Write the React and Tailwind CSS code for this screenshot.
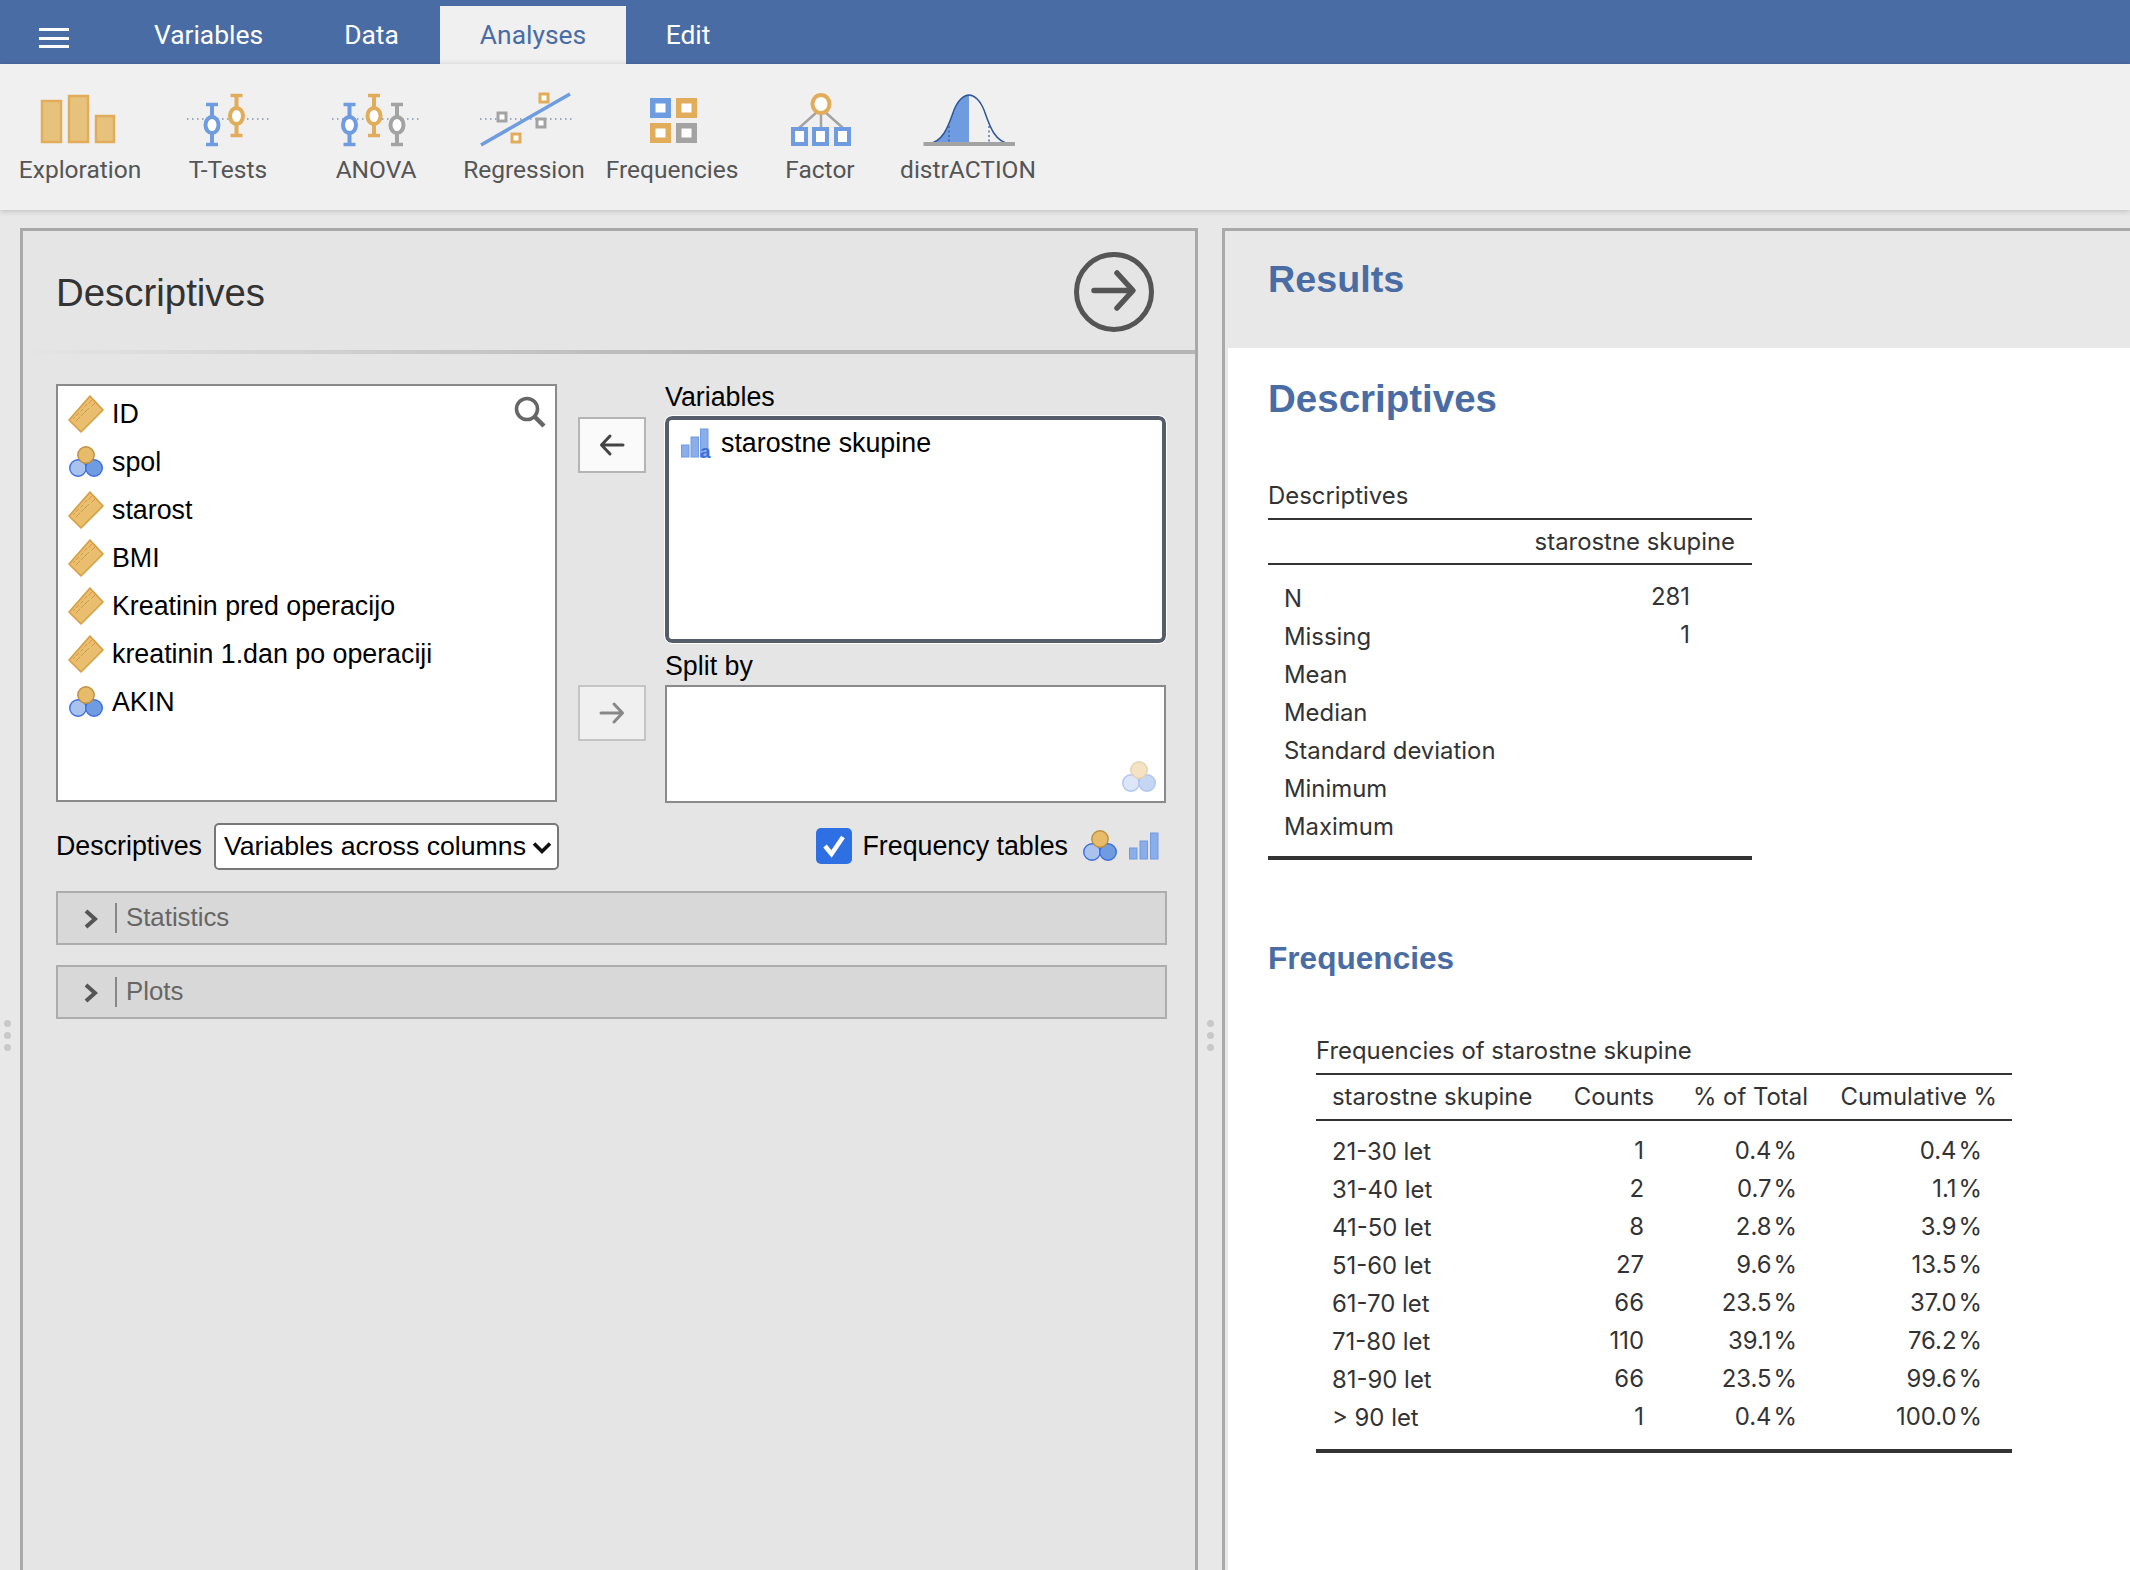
import React from "react";

const BLUE = "#6f9be0";
const ORANGE = "#e2ad5b";
const GREY = "#a3a3a3";

function Whisker({ x, top, bottom, cy, color }) {
  return (
    <g stroke={color} fill="none">
      <path d={`M${x} ${top}V${bottom}`} strokeWidth="4" />
      <path d={`M${x - 6} ${top + 1.5}H${x + 6}M${x - 6} ${bottom - 1.5}H${x + 6}`} strokeWidth="3.5" />
      <ellipse cx={x} cy={cy} rx="6.5" ry="8" fill="#fff" strokeWidth="4" />
    </g>
  );
}

function Dotted({ x1, x2 }) {
  return <path d={`M${x1} 29H${x2}`} stroke="#7f93ad" strokeWidth="1.5" strokeDasharray="1.5 3.5" fill="none" />;
}

function Sq({ x, y, w = 10, h = 10, color }) {
  return <rect x={x} y={y} width={w} height={h} fill="#fff" stroke={color} strokeWidth="3" />;
}

const ToolIcons = {
  Exploration: (
    <g fill="#e6c27c" stroke={ORANGE} strokeWidth="2.5">
      <rect x="36" y="11" width="19" height="41" />
      <rect x="63" y="6" width="19" height="46" />
      <rect x="90" y="26" width="18" height="26" />
    </g>
  ),
  "T-Tests": (
    <g>
      <Dotted x1="33" x2="118" />
      <Whisker x={58} top={13} bottom={56} cy={35} color={BLUE} />
      <Whisker x={82.5} top={4} bottom={47} cy={26} color={ORANGE} />
    </g>
  ),
  ANOVA: (
    <g>
      <Dotted x1="30" x2="119" />
      <Whisker x={47.5} top={13} bottom={56} cy={35} color={BLUE} />
      <Whisker x={72} top={4} bottom={47} cy={26} color={ORANGE} />
      <Whisker x={95} top={13} bottom={56} cy={35} color={GREY} />
    </g>
  ),
  Regression: (
    <g>
      <Dotted x1="30" x2="122" />
      <path d="M31 55L120 4" stroke={BLUE} strokeWidth="3.5" fill="none" />
      <Sq x={90} y={4} w={8} h={8} color={ORANGE} />
      <Sq x={48} y={23} w={8} h={8} color={GREY} />
      <Sq x={87} y={29} w={8} h={8} color={GREY} />
      <Sq x={62} y={44} w={8} h={8} color={ORANGE} />
    </g>
  ),
  Frequencies: (
    <g>
      <rect x="52" y="8" width="21" height="20" fill={BLUE} />
      <rect x="78" y="8" width="21" height="20" fill={ORANGE} />
      <rect x="52" y="33" width="21" height="20" fill={ORANGE} />
      <rect x="78" y="33" width="21" height="20" fill={GREY} />
      <g fill="#fff">
        <rect x="57.5" y="13.5" width="10" height="9" />
        <rect x="83.5" y="13.5" width="10" height="9" />
        <rect x="57.5" y="38.5" width="10" height="9" />
        <rect x="83.5" y="38.5" width="10" height="9" />
      </g>
    </g>
  ),
  Factor: (
    <g>
      <path d="M71 22L53 38M75 22V38M79 22L97 38" stroke={GREY} strokeWidth="2.5" fill="none" />
      <ellipse cx="75" cy="14" rx="8.5" ry="9" fill="#fff" stroke={ORANGE} strokeWidth="4" />
      <g fill="#fff" stroke={BLUE} strokeWidth="4">
        <rect x="47" y="39" width="13" height="15" />
        <rect x="68" y="39" width="13" height="15" />
        <rect x="90" y="39" width="13" height="15" />
      </g>
    </g>
  ),
  distrACTION: (
    <g>
      <path d="M34 54C50 52 55 34 60 20C64 10 70 5 75 5V54Z" fill={BLUE} />
      <path d="M34 54C50 52 55 34 60 20C64 10 70 5 75 5C80 5 86 10 90 20C95 34 100 52 116 54" stroke="#2f5597" strokeWidth="1.5" fill="none" />
      <path d="M55 36V54M95 36V54" stroke="#2f5597" strokeWidth="1.2" strokeDasharray="2 2.5" fill="none" />
      <path d="M29.5 54H121" stroke="#a3a3a3" strokeWidth="4" fill="none" />
    </g>
  ),
};

function ToolButton({ label }) {
  return (
    <div className="w-[148px] flex flex-col items-center">
      <svg width="148" height="64" viewBox="0 0 148 64" className="mt-[26px]">
        {ToolIcons[label]}
      </svg>
      <div className="h-[32px] leading-[32px] text-[24.5px] text-[#555] whitespace-nowrap font-['Roboto',sans-serif]">{label}</div>
    </div>
  );
}

function Ruler({ className = "" }) {
  return (
    <svg width="36" height="38" viewBox="0 0 36 38" className={className}>
      <path d="M22 1L35 15L13 37L1 25Z" fill="#e9be6e" stroke="#d89e42" strokeWidth="1.6" strokeLinejoin="round" />
      <path d="M24 5L20.5 8.5M27 8L23.5 11.5M19 9L16.5 11.5M21 13L16.5 17.5M15 14L12.5 16.5M16 18L13 21M11 18L8 21M12 22L7.5 26.5M7 22L5 24" stroke="#cf9a48" strokeWidth="1" fill="none" />
    </svg>
  );
}

function Nominal({ className = "" }) {
  return (
    <svg width="34" height="32" viewBox="0 0 34 32" className={className}>
      <circle cx="9" cy="22" r="8.3" fill="#a9c3ee" stroke="#3f6fdc" strokeWidth="1.4" />
      <circle cx="25" cy="22" r="8.3" fill="#6f9be0" stroke="#3f6fdc" strokeWidth="1.4" />
      <ellipse cx="17" cy="9" rx="8.2" ry="8.2" fill="#e6bb6a" stroke="#c28f3f" strokeWidth="1.4" />
    </svg>
  );
}

function BarsA({ className = "" }) {
  return (
    <svg width="32" height="30" viewBox="0 0 32 30" className={className}>
      <g fill="#8badea" stroke="#6f9be0" strokeWidth="1">
        <rect x="0.5" y="17" width="7.5" height="12" />
        <rect x="10" y="9" width="7.5" height="20" />
        <rect x="19.5" y="1" width="7.5" height="28" />
      </g>
      <text x="19" y="29.5" fontSize="19" fontWeight="700" fill="#3f6fdc" fontFamily="'Liberation Sans',sans-serif">a</text>
    </svg>
  );
}

function Bars({ className = "" }) {
  return (
    <svg width="30" height="28" viewBox="0 0 30 28" className={className}>
      <g fill="#8badea" stroke="#6f9be0" strokeWidth="1">
        <rect x="0.5" y="16" width="7.5" height="11" />
        <rect x="11" y="9" width="7.5" height="18" />
        <rect x="21.5" y="1" width="7.5" height="26" />
      </g>
    </svg>
  );
}

function ArrowLeft({ color }) {
  return (
    <svg width="26" height="24" viewBox="0 0 26 24">
      <path d="M24 12H3M11 3L2.5 12L11 21" stroke={color} strokeWidth="3" fill="none" strokeLinecap="round" strokeLinejoin="round" />
    </svg>
  );
}

function ArrowRight({ color }) {
  return (
    <svg width="26" height="24" viewBox="0 0 26 24">
      <path d="M2 12H23M15 3L23.5 12L15 21" stroke={color} strokeWidth="3" fill="none" strokeLinecap="round" strokeLinejoin="round" />
    </svg>
  );
}

function VarRow({ name, kind }) {
  return (
    <div className="h-[48px] flex items-center">
      <div className="w-[43px] shrink-0 flex justify-start">
        {kind === "r" ? <Ruler className="-ml-[1px]" /> : <Nominal />}
      </div>
      <span className="text-[26.8px] text-black leading-none">{name}</span>
    </div>
  );
}

function Collapse({ label }) {
  return (
    <div className="h-[54px] flex items-center bg-[#d8d8d8] border-2 border-[#adadad]">
      <svg width="16" height="22" viewBox="0 0 16 22" className="ml-[25px] mt-[2px]">
        <path d="M3 3L12 11L3 19" stroke="#555" strokeWidth="4" fill="none" />
      </svg>
      <div className="ml-[16px] w-[2px] h-[30px] bg-[#888]" />
      <span className="ml-[9px] text-[25.8px] text-[#666] leading-none">{label}</span>
    </div>
  );
}

function Dots() {
  return (
    <div className="flex flex-col gap-[5px] items-center">
      <div className="w-[7px] h-[7px] rounded-full bg-[#c8c8c8]" />
      <div className="w-[7px] h-[7px] rounded-full bg-[#c8c8c8]" />
      <div className="w-[7px] h-[7px] rounded-full bg-[#c8c8c8]" />
    </div>
  );
}

const descRows = [
  ["N", "281"],
  ["Missing", "1"],
  ["Mean", ""],
  ["Median", ""],
  ["Standard deviation", ""],
  ["Minimum", ""],
  ["Maximum", ""],
];

const freqRows = [
  ["21-30 let", "1", "0.4", "0.4"],
  ["31-40 let", "2", "0.7", "1.1"],
  ["41-50 let", "8", "2.8", "3.9"],
  ["51-60 let", "27", "9.6", "13.5"],
  ["61-70 let", "66", "23.5", "37.0"],
  ["71-80 let", "110", "39.1", "76.2"],
  ["81-90 let", "66", "23.5", "99.6"],
  ["> 90 let", "1", "0.4", "100.0"],
];

function Pct({ v }) {
  return (
    <span>
      {v}
      <span className="ml-[2px]">%</span>
    </span>
  );
}

function Tab({ w, active, children }) {
  return (
    <div className={`${w} h-[58px] flex items-center justify-center text-[26.4px] pt-[2px] ${active ? "text-[#4a6ca5] bg-[#f0f0f0]" : "text-white"}`}>
      {children}
    </div>
  );
}

export default function App() {
  return (
    <div className="w-[2130px] h-[1570px] overflow-hidden flex flex-col bg-[#e8e8e8] font-['Liberation_Sans',Arial,sans-serif]">
      {/* Tab bar */}
      <div className="h-[64px] shrink-0 bg-[#4a6ca5] flex items-end font-['Roboto',sans-serif]">
        <div className="w-[114px] h-full flex items-start pt-[28px] pl-[39px]">
          <div className="w-[30px] flex flex-col gap-[5.5px]">
            <div className="h-[3px] bg-white" />
            <div className="h-[3px] bg-white" />
            <div className="h-[3px] bg-white" />
          </div>
        </div>
        <Tab w="w-[189px]">Variables</Tab>
        <Tab w="w-[137px]">Data</Tab>
        <Tab w="w-[186px]" active>Analyses</Tab>
        <Tab w="w-[124px]">Edit</Tab>
      </div>

      {/* Toolbar */}
      <div className="h-[146px] shrink-0 bg-[#f0f0f0] flex pl-[6px] shadow-[0_1px_6px_rgba(0,0,0,0.2)] relative">
        {Object.keys(ToolIcons).map((k) => (
          <ToolButton key={k} label={k} />
        ))}
      </div>

      {/* Main */}
      <div className="flex-1 flex min-h-0 pt-[18px]">
        <div className="w-[20px] shrink-0 flex justify-center pt-[792px] pr-[6px]">
          <Dots />
        </div>

        {/* Options panel */}
        <div className="w-[1178px] shrink-0 bg-[#e5e5e5] border-[3px] border-b-0 border-[#a9a9a9]">
          <div className="h-[119px] flex items-center justify-between pl-[33px] pr-[41px] pt-[3px]">
            <span className="text-[38.4px] text-[#333] leading-none mt-[3px]">Descriptives</span>
            <svg width="80" height="80" viewBox="0 0 80 80">
              <circle cx="40" cy="40" r="37.5" stroke="#555" strokeWidth="5" fill="none" />
              <path d="M20 38.5H57M43 21L59 38.5L43 56" stroke="#555" strokeWidth="5.5" fill="none" strokeLinecap="round" strokeLinejoin="round" />
            </svg>
          </div>
          <div className="h-[4px] bg-gradient-to-r from-[#e5e5e5] to-[#b5b5b5] to-60%" />

          <div className="pl-[33px] pr-[28px] pt-[30px]">
            <div className="flex">
              <div className="relative w-[501px] h-[418px] shrink-0 bg-white border-2 border-[#8a8a8a] pl-[11px] pt-[4px]">
                <VarRow name="ID" kind="r" />
                <VarRow name="spol" kind="n" />
                <VarRow name="starost" kind="r" />
                <VarRow name="BMI" kind="r" />
                <VarRow name="Kreatinin pred operacijo" kind="r" />
                <VarRow name="kreatinin 1.dan po operaciji" kind="r" />
                <VarRow name="AKIN" kind="n" />
                <svg width="32" height="32" viewBox="0 0 32 32" className="absolute right-[9px] top-[10px]">
                  <circle cx="13" cy="13" r="10.5" stroke="#666" strokeWidth="3.6" fill="none" />
                  <path d="M21 21L30 30" stroke="#666" strokeWidth="4.5" fill="none" />
                </svg>
              </div>

              <div className="w-[68px] shrink-0 ml-[21px] pt-[33px] flex flex-col gap-[212px]">
                <div className="h-[56px] flex items-center justify-center bg-[#fafafa] border-2 border-[#b5b5b5]">
                  <ArrowLeft color="#444" />
                </div>
                <div className="h-[56px] flex items-center justify-center bg-[#f0f0f0] border-2 border-[#c4c4c4]">
                  <ArrowRight color="#888" />
                </div>
              </div>

              <div className="w-[501px] shrink-0 ml-[19px]">
                <div className="h-[32px] text-[26.8px] leading-[26px] text-black">Variables</div>
                <div className="h-[227px] bg-white rounded-[7px] border-[4px] border-[#555d69] outline-1 outline-white flex items-start pl-[12px] pt-[8px]">
                  <BarsA />
                  <span className="ml-[8px] text-[26.8px] leading-[30px] text-black">starostne skupine</span>
                </div>
                <div className="h-[42px] pt-[9px] text-[26.8px] leading-[28px] text-black">Split by</div>
                <div className="relative h-[118px] bg-white border-2 border-[#8a8a8a]">
                  <Nominal className="absolute right-[8px] bottom-[8px] opacity-40" />
                </div>
              </div>
            </div>

            <div className="mt-[19px] h-[48px] flex items-center">
              <span className="text-[26.8px] leading-none text-black">Descriptives</span>
              <div className="relative ml-[12px] w-[345px] h-[47px]">
                <select
                  defaultValue="a"
                  className="appearance-none w-full h-full bg-white border-2 border-[#777] rounded-[5px] text-[26.7px] text-black pl-[8px] font-['Liberation_Sans',Arial,sans-serif]"
                >
                  <option value="a">Variables across columns</option>
                </select>
                <svg width="20" height="14" viewBox="0 0 20 14" className="absolute right-[7px] top-[18px]">
                  <path d="M2 2.5L10 10.5L18 2.5" stroke="#111" strokeWidth="3.6" fill="none" />
                </svg>
              </div>
              <div className="ml-auto flex items-center mr-[8px]">
                <div className="w-[36px] h-[36px] rounded-[5px] bg-[#2f6fe4] flex items-center justify-center">
                  <svg width="28" height="28" viewBox="0 0 28 28">
                    <path d="M5 14L11.5 22L23 5" stroke="#fff" strokeWidth="4.5" fill="none" />
                  </svg>
                </div>
                <span className="ml-[10px] text-[26.8px] leading-none text-black">Frequency tables</span>
                <Nominal className="ml-[15px]" />
                <Bars className="ml-[12px]" />
              </div>
            </div>

            <div className="mt-[21px]">
              <Collapse label="Statistics" />
            </div>
            <div className="mt-[20px]">
              <Collapse label="Plots" />
            </div>
          </div>
        </div>

        <div className="w-[24px] shrink-0 flex justify-center pt-[792px]">
          <Dots />
        </div>

        {/* Results panel */}
        <div className="flex-1 flex flex-col bg-[#e8e8e8] border-l-[3px] border-t-[3px] border-[#a9a9a9]">
          <div className="h-[117px] shrink-0 pl-[43px] pt-[25px]">
            <div className="text-[37.7px] leading-[46px] font-bold text-[#4a6ca5]">Results</div>
          </div>
          <div className="flex-1 ml-[3px] bg-white pl-[40px] pt-[13px] font-['Inter',sans-serif] text-[#333]">
            <div className="h-[76px] flex items-center text-[38.5px] font-bold text-[#4a6ca5] font-['Liberation_Sans',Arial,sans-serif]">Descriptives</div>

            <div className="w-[484px] mt-[37px] text-[23.9px]">
              <div className="h-[44px] flex items-center">Descriptives</div>
              <div className="border-t-2 border-b-2 border-[#333] h-[47px] flex items-center justify-end pr-[17px]">starostne skupine</div>
              <div className="pt-[15px]">
                {descRows.map(([k, v]) => (
                  <div key={k} className="h-[38px] flex items-center">
                    <span className="w-[405px] pl-[16px]">{k}</span>
                    <span className="w-[17px]" />
                    <span className="-translate-y-[2px] w-[0px] flex justify-end whitespace-nowrap">{v}</span>
                  </div>
                ))}
              </div>
              <div className="mt-[10px] h-[4px] bg-[#333]" />
            </div>

            <div className="mt-[77px] h-[44px] flex items-center text-[31.6px] font-bold text-[#4a6ca5] font-['Liberation_Sans',Arial,sans-serif]">Frequencies</div>

            <div className="w-[696px] ml-[48px] mt-[48px] text-[23.9px]">
              <div className="h-[44px] flex items-center">Frequencies of starostne skupine</div>
              <div className="border-t-2 border-b-2 border-[#333] h-[48px] grid grid-cols-[244px_105px_155px_192px] items-center">
                <span className="pl-[16px]">starostne skupine</span>
                <span className="text-right pr-[11px]">Counts</span>
                <span className="text-right pr-[12px]">% of Total</span>
                <span className="text-right pr-[15px]">Cumulative %</span>
              </div>
              <div className="pt-[12px]">
                {freqRows.map((r) => (
                  <div key={r[0]} className="h-[38px] grid grid-cols-[244px_105px_155px_192px] items-center">
                    <span className="pl-[16px]">{r[0]}</span>
                    <span className="text-right pr-[21px] -translate-y-[1.5px]">{r[1]}</span>
                    <span className="text-right pr-[23px] -translate-y-[1.5px]"><Pct v={r[2]} /></span>
                    <span className="text-right pr-[30px] -translate-y-[1.5px]"><Pct v={r[3]} /></span>
                  </div>
                ))}
              </div>
              <div className="mt-[12px] h-[4px] bg-[#333]" />
            </div>
          </div>
        </div>
      </div>
    </div>
  );
}
